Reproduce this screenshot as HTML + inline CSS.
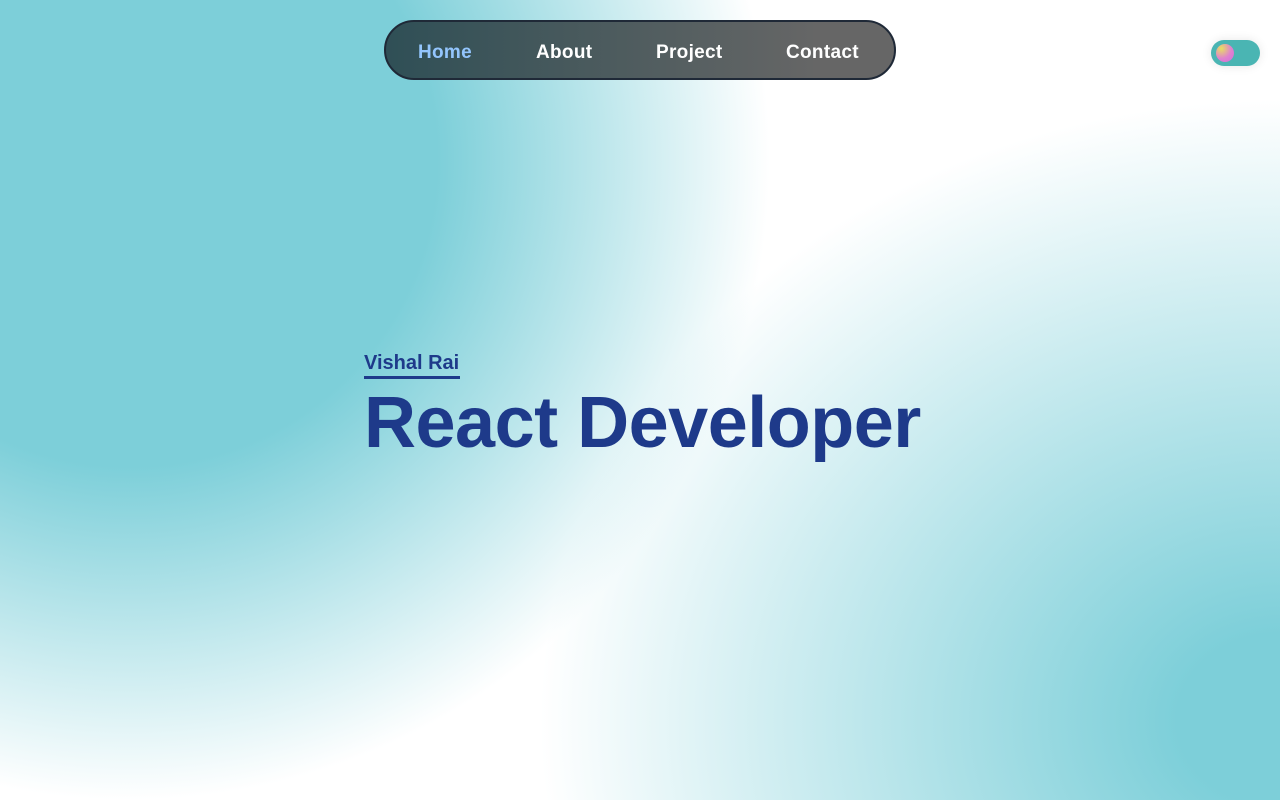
<!DOCTYPE html>
<html><head><style>
html,body{margin:0;width:1280px;height:800px;overflow:hidden;font-family:"Liberation Sans",sans-serif}
body{background:
radial-gradient(ellipse 640px 640px at 130px 160px,#7dcfd9 0%,#7dcfd9 48%,rgba(125,207,217,0) 100%),
radial-gradient(ellipse 740px 620px at 1280px 720px,#7dcfd9 0%,#7dcfd9 14%,rgba(125,207,217,0) 100%),
#fff;position:relative}
nav{position:absolute;left:384px;top:20px;width:512px;height:60px;border:2px solid #1f2937;border-radius:30px;box-sizing:border-box;background:linear-gradient(90deg,#2f4f56,#4a5a5d 40%,#666 85%);}
nav span{position:absolute;top:20px;font-weight:bold;font-size:19px;color:#fff;letter-spacing:.3px}
.tog{position:absolute;left:1211px;top:40px;width:49px;height:26px;border-radius:13px;background:#4ab5b3;box-shadow:0 0 10px rgba(0,0,0,.1)}
.tog i{position:absolute;left:5px;top:4px;width:18px;height:18px;border-radius:50%;background:radial-gradient(circle at 30% 25%,#e8e060,#e080d0 55%,#d070d8)}
.n{position:absolute;left:364px;top:352px;font-size:20px;font-weight:bold;color:#1e3a8a;border-bottom:3px solid #1e3a8a;padding-bottom:1px;width:96px}
h1{position:absolute;left:364px;top:382px;margin:0;font-size:72px;font-weight:bold;color:#1e3a8a;letter-spacing:-0.5px}
</style></head><body>
<nav><span style="left:32px;color:#93c5fd">Home</span><span style="left:150px">About</span><span style="left:270px">Project</span><span style="left:400px">Contact</span></nav>
<div class="tog"><i></i></div>
<div class="n">Vishal Rai</div>
<h1>React Developer</h1>
</body></html>
